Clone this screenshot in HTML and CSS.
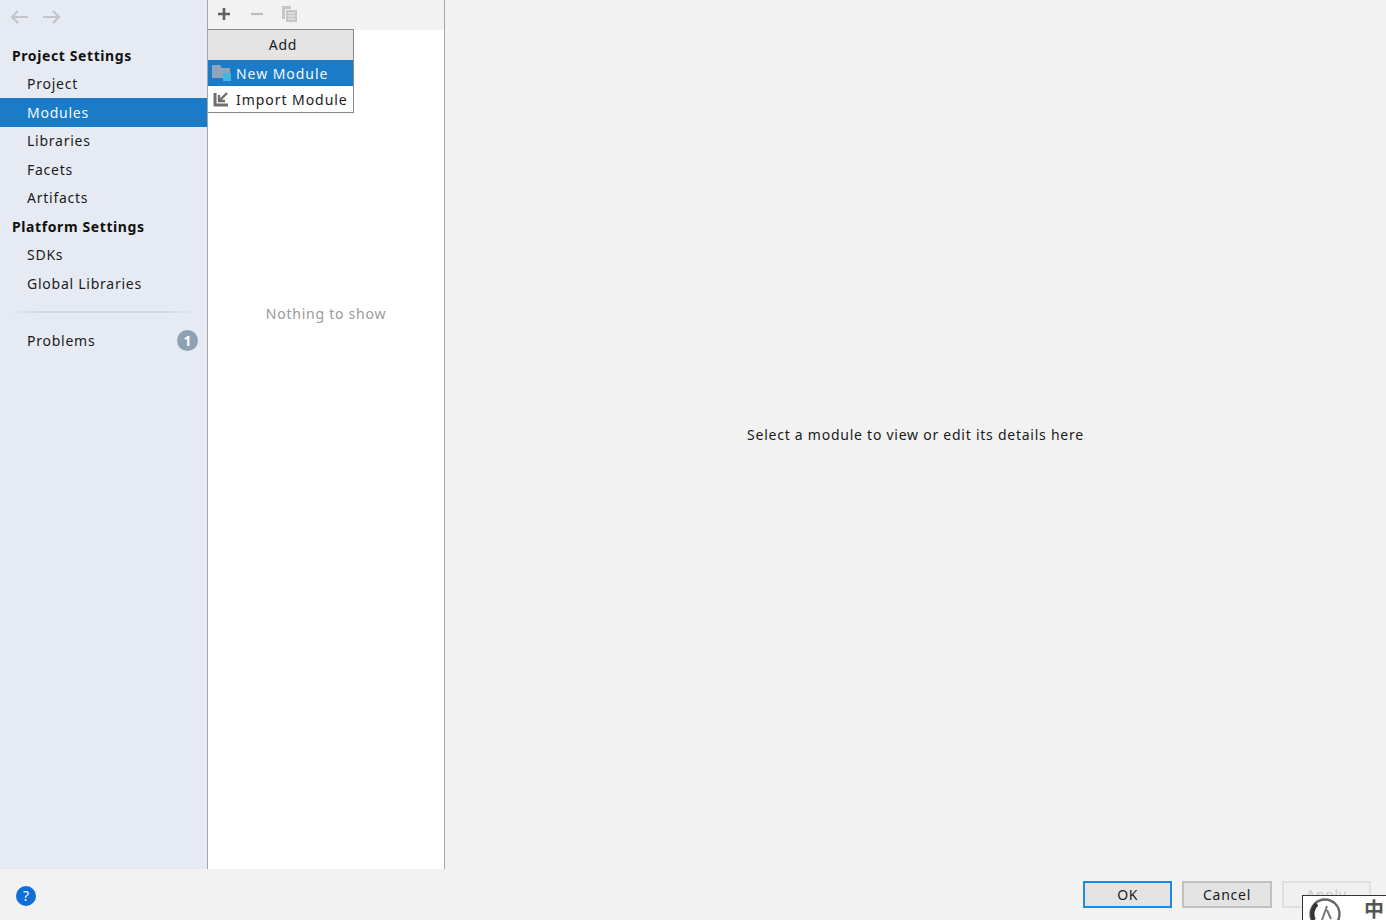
FILE: index.html
```html
<!DOCTYPE html>
<html lang="en">
<head>
<meta charset="utf-8">
<title>Project Structure</title>
<link rel="stylesheet" href="styles.css">
</head>
<body>
<div class="app">
  <div class="panes">
    <aside class="sidebar">
      <div class="nav-tools">
        <svg class="tool" width="18" height="14" viewBox="0 0 18 14"><path d="M18 7H2M8 1 2 7l6 6" fill="none" stroke="#c2c5c9" stroke-width="2.2"/></svg>
        <svg class="tool" width="18" height="14" viewBox="0 0 18 14"><path d="M0 7h16M10 1l6 6-6 6" fill="none" stroke="#c2c5c9" stroke-width="2.2"/></svg>
      </div>
      <div class="row head">Project Settings</div>
      <div class="row item">Project</div>
      <div class="row item active">Modules</div>
      <div class="row item">Libraries</div>
      <div class="row item">Facets</div>
      <div class="row item">Artifacts</div>
      <div class="row head">Platform Settings</div>
      <div class="row item">SDKs</div>
      <div class="row item">Global Libraries</div>
      <div class="row sep"><span class="sep-line"></span></div>
      <div class="row item problems"><span>Problems</span><span class="badge">1</span></div>
    </aside>
    <section class="list">
      <div class="list-tools">
        <svg class="plus" width="14" height="14" viewBox="0 0 14 14"><path d="M7 1v12M1 7h12" stroke="#5f6165" stroke-width="2.6"/></svg>
        <svg class="minus" width="14" height="14" viewBox="0 0 14 14"><path d="M1 7h12" stroke="#b9bbbe" stroke-width="2.2"/></svg>
        <svg width="17" height="18" viewBox="0 0 17 18"><path d="M1 1h9v3H4v10H1z" fill="#c4c6c8"/><path d="M5 5h11v12H5z" fill="#c4c6c8"/><path d="M7 8h7M7 11h7M7 14h7" stroke="#eef0f0" stroke-width="1"/></svg>
      </div>
      <div class="empty">Nothing to show</div>
    </section>
    <main class="details">Select a module to view or edit its details here</main>
  </div>
  <footer class="footer">
    <span class="help">?</span>
    <div class="buttons">
      <button class="btn primary">OK</button>
      <button class="btn">Cancel</button>
      <button class="btn disabled">Apply</button>
    </div>
  </footer>
  <div class="menu">
    <div class="menu-title">Add</div>
    <div class="menu-item selected">
      <svg width="20" height="18" viewBox="0 0 20 18"><path d="M0 1h8l2 3h8v10H0z" fill="#8fa4b8"/><path d="M11 9h8v8h-8z" fill="#40b6e0"/></svg>
      <span>New Module</span>
    </div>
    <div class="menu-item">
      <svg width="20" height="18" viewBox="0 0 20 18"><path d="M3 3v12h13" fill="none" stroke="#6e6e6e" stroke-width="3"/><path d="M15 3 7 11M7 5v6h6" fill="none" stroke="#6e6e6e" stroke-width="2.4"/></svg>
      <span>Import Module</span>
    </div>
  </div>
  <div class="ime">
    <svg width="38" height="24" viewBox="0 0 38 24"><circle cx="22" cy="18" r="14.5" fill="none" stroke="#666" stroke-width="2.4"/><path d="M14 8a13 13 0 0 0-3 16" fill="none" stroke="#333" stroke-width="4"/><path d="M24 10l-5 14M24 14l4 9" fill="none" stroke="#777" stroke-width="2"/></svg>
    <span class="ime-zh">中</span>
  </div>
</div>
</body>
</html>
```
FILE: styles.css
```css
* { box-sizing: border-box; }
html, body { margin: 0; height: 100%; overflow: hidden; }
body { font-family: "Noto Sans", "Noto Sans CJK SC", sans-serif; font-size: 14px; letter-spacing: 0.75px; color: #1b1b1b; }
.app { position: relative; width: 1386px; height: 920px; display: flex; flex-direction: column; background: #f2f2f2; overflow: hidden; }
.panes { flex: 1; display: flex; min-height: 0; }
.sidebar { width: 208px; flex: none; background: #e6ebf3; border-right: 1px solid #a6a6a6; }
.nav-tools { height: 41px; display: flex; gap: 15px; padding: 10px 0 0 10px; align-items: flex-start; }
.row { height: 28.5px; display: flex; align-items: center; white-space: nowrap; }
.head { padding: 1px 0 0 12px; font-weight: 700; letter-spacing: 0.6px; color: #111; }
.item { padding-left: 27px; }
.active { background: #1a7cc8; color: #f4f8fc; }
.sep { padding: 0 8px 0 8px; }
.sep-line { flex: 1; height: 2px; background: linear-gradient(90deg, #e6ebf3, #d6d9df 15%, #d6d9df 85%, #e6ebf3); }
.problems { justify-content: space-between; padding-right: 9px; }
.badge { width: 21px; height: 21px; border-radius: 50%; background: #8fa0b3; color: #fff; font-weight: 700; font-size: 14px; letter-spacing: 0; display: flex; align-items: center; justify-content: center; }
.list { width: 237px; flex: none; background: #fff; border-right: 1px solid #a6a6a6; display: flex; flex-direction: column; }
.list-tools { height: 30px; flex: none; background: #f2f2f2; display: flex; align-items: center; gap: 17px; padding: 0 0 2px 9px; }
.plus { margin-right: 2px; }
.empty { flex: 1; display: flex; align-items: flex-start; justify-content: center; color: #9a9a9a; padding-top: 274px; }
.details { flex: 1; display: flex; align-items: center; justify-content: center; }
.footer { height: 51px; flex: none; display: flex; align-items: center; justify-content: space-between; padding: 0 15px 0 16px; background: #f2f2f2; }
.help { width: 20px; height: 20px; margin-top: 2px; border-radius: 50%; background: #0f6fd6; color: #fff; display: flex; align-items: center; justify-content: center; font-size: 14px; letter-spacing: 0; }
.buttons { display: flex; gap: 10px; }
.btn { width: 89.33px; height: 27px; font: inherit; letter-spacing: inherit; color: #1b1b1b; background: #e3e3e3; border: 2px solid #c0c0c0; padding: 0; }
.primary { border-color: #1a8be6; }
.disabled { background: #f0f0f0; border-color: #e0e0e0; color: #c8c8c8; }
.menu { position: absolute; left: 207px; top: 29px; width: 147px; height: 84px; background: #fff; border: 1px solid #8a8a8a; border-left-color: #a6a6a6; }
.menu-title { height: 30px; background: #e4e4e4; display: flex; align-items: center; justify-content: center; padding: 0 0 2px 5px; }
.menu-item { height: 26px; display: flex; align-items: center; gap: 4px; padding-left: 4px; white-space: nowrap; letter-spacing: 0.95px; }
.selected { background: #1a7cc8; color: #f4f8fc; }
.ime { position: absolute; left: 1302px; top: 895px; width: 84px; height: 25px; background: #fff; border: 1px solid #333; border-width: 1.5px 0 0 1.5px; display: flex; }
.ime svg { flex: none; overflow: hidden; }
.ime-zh { margin: 3px 0 0 23px; height: 20px; font-size: 20px; line-height: 20px; color: #555; font-weight: 700; font-family: "Noto Sans CJK SC", sans-serif; letter-spacing: 0; }
```
